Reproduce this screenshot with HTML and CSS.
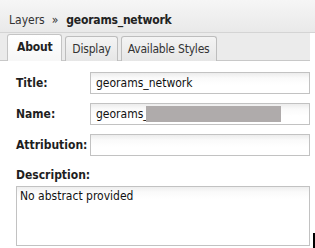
FILE: index.html
```html
<!DOCTYPE html>
<html>
<head>
<meta charset="utf-8">
<link rel="stylesheet" href="styles.css">
</head>
<body>
<div class="header"><span class="crumb">Layers</span><span class="sep">»</span><span class="title">georams_network</span></div>
<div class="tabbar">
  <div class="tab active">About</div>
  <div class="tab">Display</div>
  <div class="tab">Available Styles</div>
</div>
<div class="panel">
  <div class="row"><label class="lbl">Title:</label><div class="field">georams_network</div></div>
  <div class="row"><label class="lbl">Name:</label><div class="field">georams_<span class="redact"></span></div></div>
  <div class="row"><label class="lbl">Attribution:</label><div class="field"></div></div>
  <div class="desc-lbl">Description:</div>
  <div class="textarea">No abstract provided</div>
</div>
<div class="cursor"></div>
</body>
</html>
```
FILE: styles.css
```css
html, body { margin: 0; padding: 0; }
body {
  width: 315px; height: 248px; overflow: hidden; position: relative;
  background: #fff;
  font-family: "DejaVu Sans Condensed", "DejaVu Sans", Verdana, sans-serif;
  font-size: 12px; color: #222;
}
.header {
  border-bottom: 1px solid #d4d4d4;
  background: linear-gradient(#f6f6f6, #e9e9e9);
  display: flex; align-items: center; padding: 7px 0 0 9px;
  box-sizing: border-box;
  height: 33px;
}
.crumb { color: #333; }
.sep { margin: 0 8px 0 7px; color: #333; font-size: 12px; }
.title { font-weight: bold; color: #222; letter-spacing: -0.2px; }
.tabbar {
  height: 28px; background: #ebebeb;
  display: flex; align-items: flex-end; gap: 3px; padding-left: 7px;
  border-bottom: 1px solid #c8c8c8; box-sizing: border-box;
  width: 310px;
}
.tab {
  height: 25px; box-sizing: border-box;
  border: 1px solid #bdbdbd; border-bottom: none;
  border-radius: 3px 3px 0 0;
  background: linear-gradient(#f4f4f4, #e6e6e6);
  padding: 0 6px 1px; display: flex; align-items: center; color: #333;
  margin-bottom: -1px; letter-spacing: -0.2px;
}
.tab.active { background: linear-gradient(#fff, #f7f7f7); font-weight: bold; color: #222; height: 27px; padding: 0 9px 2px 9px; border-color: #c4c4c4;}
.panel { padding: 11px 5px 0 16px; width: 315px; box-sizing: border-box; }
.row { display: flex; align-items: center; height: 22px; margin-bottom: 9px; }
.lbl { width: 74px; flex: none; font-weight: bold; color: #1e1e1e; }
.field {
  width: 220px; flex: none; height: 22px; box-sizing: border-box;
  border: 1px solid #c2c2c2;
  background: linear-gradient(#ececec, #fafafa 5px, #fff 12px);
  padding-left: 5px; display: flex; align-items: center; color: #111;
  font-size: 12px;
}
.redact { width: 135px; height: 16px; margin-left: -3px; background: #afabab; display: inline-block; }
.desc-lbl { font-weight: bold; margin-top: 12px; height: 18px; color: #1e1e1e; }
.textarea {
  width: 294px; height: 60px; box-sizing: border-box;
  border: 1px solid #c2c2c2; margin-top: 0;
  background: linear-gradient(#eeeeee, #fafafa 5px, #fff 12px);
  padding: 2px 3px; font-size: 12px; color: #111;
}
.cursor { position: absolute; left: 313px; top: 233px; width: 2px; height: 15px; background: #000; }
```
